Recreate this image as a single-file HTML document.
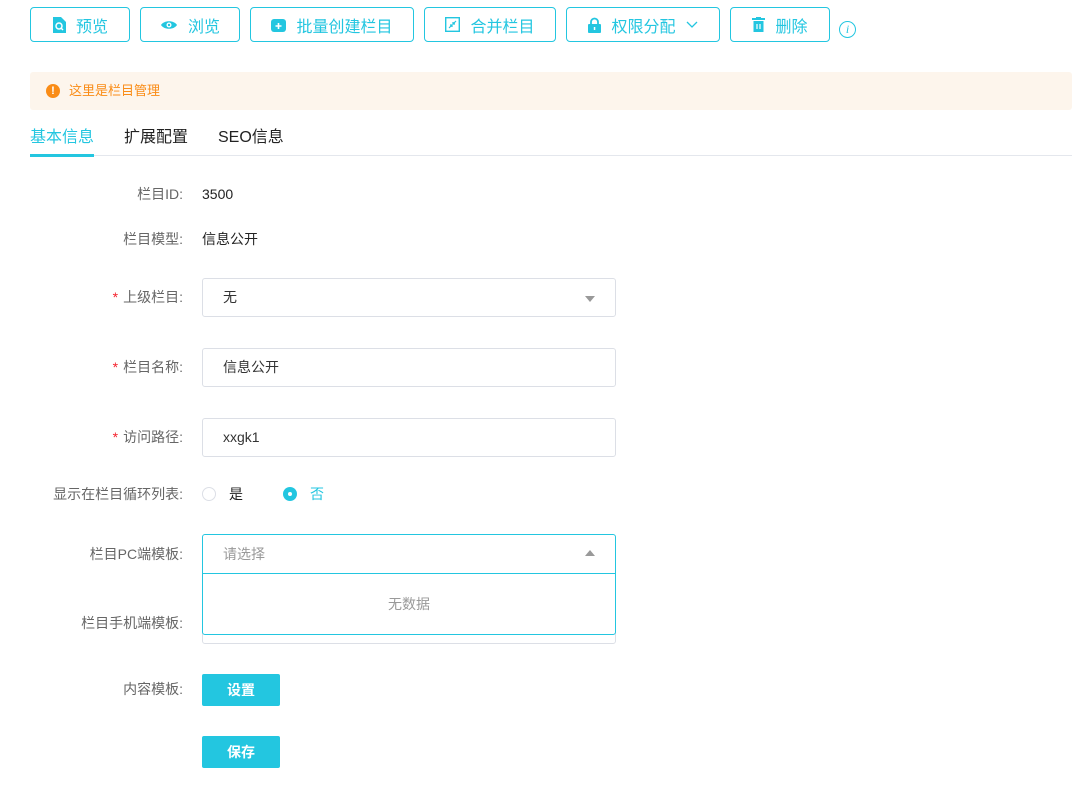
<!DOCTYPE html>
<html><head><meta charset="utf-8"><style>
*{box-sizing:border-box;margin:0;padding:0}
body{width:1072px;height:811px;background:#fff;font-family:"Liberation Sans","Noto Sans CJK SC",sans-serif;font-size:14px;color:#333;position:relative;overflow:hidden}
.a{position:absolute}
.btn{position:absolute;top:7px;height:35px;border:1px solid #23c6e0;border-radius:4px;color:#23c6e0;font-size:16px;display:flex;align-items:center;justify-content:center;gap:10px;background:#fff}
.lbl{position:absolute;right:889px;font-size:14px;color:#666;white-space:nowrap;line-height:20px}
.lbl b{color:#f5222d;font-weight:normal;margin-right:5px}
.val{position:absolute;left:202px;line-height:20px;color:#222}
.inp{position:absolute;left:202px;width:414px;height:39px;border:1px solid #dcdfe6;border-radius:3px;padding-left:20px;line-height:37px;color:#333}
.pb{position:absolute;left:202px;width:78px;height:32px;background:#23c6e0;color:#fff;border-radius:2px;text-align:center;line-height:32px;font-size:14px;font-weight:bold}
</style></head><body>
<div class="btn" style="left:30px;width:100px"><svg width="14" height="16" viewBox="0 0 14 16"><path d="M1 0h8l5 5v11H1z" fill="#23c6e0"/><circle cx="7" cy="9" r="3" fill="none" stroke="#fff" stroke-width="1.5"/><path d="M9 11l2 2" stroke="#fff" stroke-width="1.5"/></svg>预览</div>
<div class="btn" style="left:140px;width:100px"><svg width="18" height="12" viewBox="0 0 18 12"><path d="M1 6C4 1 14 1 17 6C14 11 4 11 1 6z" fill="#23c6e0"/><circle cx="9" cy="6" r="2.5" fill="#fff"/><circle cx="9" cy="6" r="1.2" fill="#23c6e0"/></svg>浏览</div>
<div class="btn" style="left:250px;width:164px"><svg width="15" height="14" viewBox="0 0 15 14"><rect x="0" y="1" width="15" height="13" rx="3" fill="#23c6e0"/><path d="M7.5 5v6M4.5 8h6" stroke="#fff" stroke-width="1.6"/></svg>批量创建栏目</div>
<div class="btn" style="left:424px;width:132px"><svg width="15" height="15" viewBox="0 0 15 15"><rect x="0.7" y="0.7" width="13.6" height="13.6" fill="none" stroke="#23c6e0" stroke-width="1.4"/><path d="M11 4L8 7M4 11l3-3M8 5v2h2M5 8h2v2" stroke="#23c6e0" stroke-width="1.2" fill="none"/></svg>合并栏目</div>
<div class="btn" style="left:566px;width:154px"><svg width="13" height="16" viewBox="0 0 13 16"><path d="M3 7V5a3.5 3.5 0 017 0v2" stroke="#23c6e0" stroke-width="1.8" fill="none"/><rect x="0" y="7" width="13" height="9" rx="1" fill="#23c6e0"/><rect x="5.8" y="10" width="1.5" height="3" fill="#fff"/></svg>权限分配<svg width="12" height="8" viewBox="0 0 12 8"><path d="M1 1l5 5 5-5" stroke="#23c6e0" stroke-width="1.3" fill="none"/></svg></div>
<div class="btn" style="left:730px;width:100px"><svg width="13" height="15" viewBox="0 0 13 15"><rect x="0" y="1" width="13" height="2" fill="#23c6e0"/><rect x="4" y="0" width="5" height="2" fill="#23c6e0"/><rect x="1.5" y="4" width="10" height="11" fill="#23c6e0"/><path d="M5 7v5M8 7v5" stroke="#fff" stroke-width="1.2"/></svg>删除</div>
<div class="a" style="left:839px;top:21px;width:17px;height:17px;border:1.3px solid #23c6e0;border-radius:50%;color:#23c6e0;font:italic 12px 'Liberation Serif',serif;text-align:center;line-height:15px">i</div>

<div class="a" style="left:30px;top:72px;width:1042px;height:38px;background:#fdf5ec;border-radius:3px"></div>
<div class="a" style="left:46px;top:84px;width:14px;height:14px;border-radius:50%;background:#fa8c16;color:#fff;font-size:11px;font-weight:bold;text-align:center;line-height:14px">!</div>
<div class="a" style="left:69px;top:82px;color:#fa8c16;font-size:13px;line-height:18px">这里是栏目管理</div>

<div class="a" style="left:30px;top:128px;font-size:16px;color:#23c6e0;line-height:20px">基本信息</div>
<div class="a" style="left:124px;top:128px;font-size:16px;color:#222;line-height:20px">扩展配置</div>
<div class="a" style="left:218px;top:128px;font-size:16px;color:#222;line-height:20px">SEO信息</div>
<div class="a" style="left:30px;top:155px;width:1042px;height:1px;background:#e4e7ed"></div>
<div class="a" style="left:30px;top:154px;width:64px;height:3px;background:#23c6e0"></div>

<div class="lbl" style="top:184px">栏目ID:</div><div class="val" style="top:184px">3500</div>
<div class="lbl" style="top:229px">栏目模型:</div><div class="val" style="top:229px">信息公开</div>
<div class="lbl" style="top:287px"><b>*</b>上级栏目:</div>
<div class="inp" style="top:278px">无<span class="a" style="right:20px;top:17px;border:5px solid transparent;border-top:6px solid #999;border-bottom:0"></span></div>
<div class="lbl" style="top:357px"><b>*</b>栏目名称:</div>
<div class="inp" style="top:348px">信息公开</div>
<div class="lbl" style="top:427px"><b>*</b>访问路径:</div>
<div class="inp" style="top:418px">xxgk1</div>
<div class="lbl" style="top:484px">显示在栏目循环列表:</div>
<div class="a" style="left:202px;top:487px;width:14px;height:14px;border:1px solid #dcdfe6;border-radius:50%"></div>
<div class="val" style="left:229px;top:484px">是</div>
<div class="a" style="left:283px;top:487px;width:14px;height:14px;background:#23c6e0;border-radius:50%"><div class="a" style="left:5px;top:5px;width:4px;height:4px;background:#fff;border-radius:50%"></div></div>
<div class="val" style="left:310px;top:484px;color:#23c6e0">否</div>

<div class="lbl" style="top:544px">栏目PC端模板:</div>
<div class="lbl" style="top:613px">栏目手机端模板:</div>
<div class="a" style="left:202px;top:604px;width:414px;height:40px;border:1px solid #dcdfe6;border-radius:3px"></div>
<div class="a" style="left:202px;top:534px;width:414px;height:101px;border:1px solid #23c6e0;border-radius:3px;background:#fff"></div>
<div class="a" style="left:202px;top:573px;width:414px;height:1px;background:#23c6e0"></div>
<div class="a" style="left:223px;top:544px;color:#999;line-height:20px">请选择</div>
<span class="a" style="left:585px;top:550px;border:5px solid transparent;border-bottom:6px solid #999;border-top:0"></span>
<div class="a" style="left:202px;top:594px;width:414px;text-align:center;color:#999;line-height:20px">无数据</div>

<div class="lbl" style="top:679px">内容模板:</div>
<div class="pb" style="top:674px">设置</div>
<div class="pb" style="top:736px">保存</div>
</body></html>
